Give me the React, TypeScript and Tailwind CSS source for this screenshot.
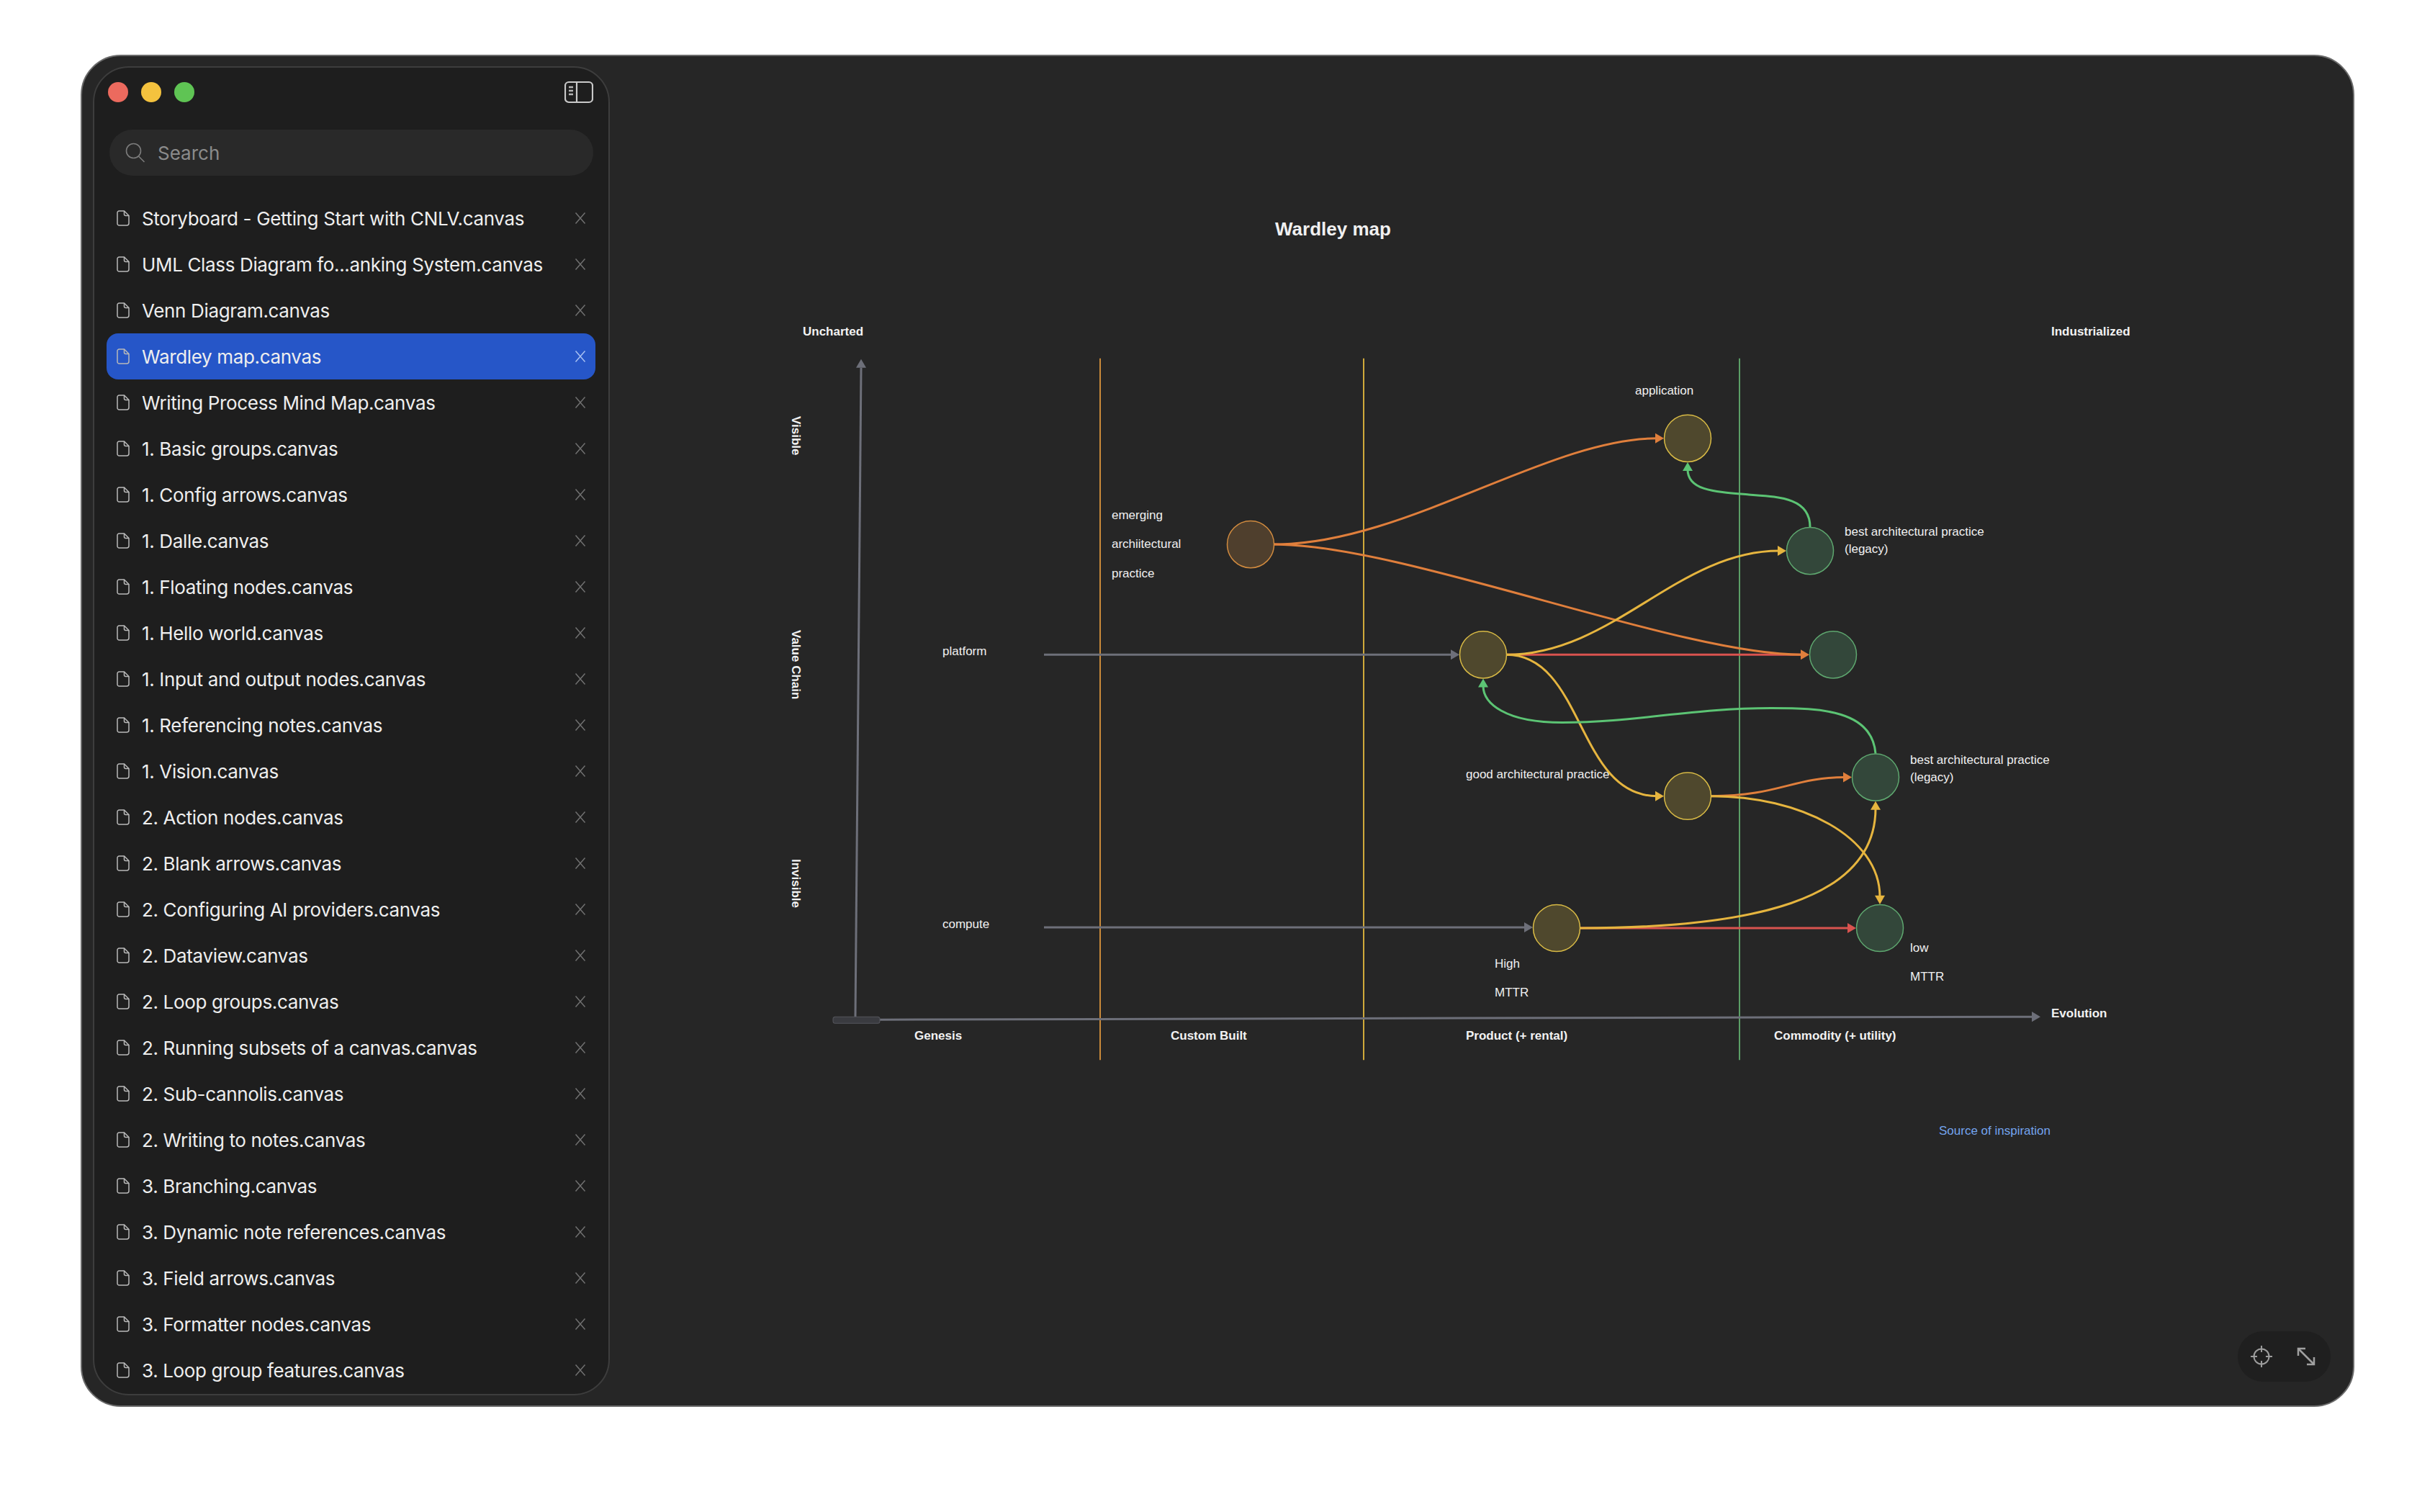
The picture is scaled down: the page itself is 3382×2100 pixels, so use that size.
const files = [
  'Storyboard - Getting Start with CNLV.canvas',
  'UML Class Diagram fo...anking System.canvas',
  'Venn Diagram.canvas',
  'Wardley map.canvas',
  'Writing Process Mind Map.canvas',
  '1. Basic groups.canvas',
  '1. Config arrows.canvas',
  '1. Dalle.canvas',
  '1. Floating nodes.canvas',
  '1. Hello world.canvas',
  '1. Input and output nodes.canvas',
  '1. Referencing notes.canvas',
  '1. Vision.canvas',
  '2. Action nodes.canvas',
  '2. Blank arrows.canvas',
  '2. Configuring AI providers.canvas',
  '2. Dataview.canvas',
  '2. Loop groups.canvas',
  '2. Running subsets of a canvas.canvas',
  '2. Sub-cannolis.canvas',
  '2. Writing to notes.canvas',
  '3. Branching.canvas',
  '3. Dynamic note references.canvas',
  '3. Field arrows.canvas',
  '3. Formatter nodes.canvas',
  '3. Loop group features.canvas',
];

// canvas coordinates are page pixels, main panel starts at 847,78
const OX = 847;
const OY = 78;
// the map is a touch taller than its measured coordinates
const YS = 1875 / 1872;

const GRAY = '#6d6f79';
const ORANGE = '#e07f3c';
const YELLOW = '#e6b53f';
const GREEN = '#5cc474';
const RED = '#d9534f';

const labels = [
  { text: 'Uncharted', x: 1115, y: 459, bold: true },
  { text: 'Industrialized', x: 2849, y: 459, bold: true },
  { text: 'emerging', x: 1544, y: 714 },
  { text: 'archiitectural', x: 1544, y: 754 },
  { text: 'practice', x: 1544, y: 795 },
  { text: 'platform', x: 1309, y: 903 },
  { text: 'application', x: 2271, y: 541 },
  { text: 'best architectural practice', x: 2562, y: 737 },
  { text: '(legacy)', x: 2562, y: 761 },
  { text: 'good architectural practice', x: 2036, y: 1073 },
  { text: 'best architectural practice', x: 2653, y: 1053 },
  { text: '(legacy)', x: 2653, y: 1077 },
  { text: 'compute', x: 1309, y: 1281 },
  { text: 'High', x: 2076, y: 1336 },
  { text: 'MTTR', x: 2076, y: 1376 },
  { text: 'low', x: 2653, y: 1314 },
  { text: 'MTTR', x: 2653, y: 1354 },
  { text: 'Genesis', x: 1270, y: 1436, bold: true },
  { text: 'Custom Built', x: 1626, y: 1436, bold: true },
  { text: 'Product (+ rental)', x: 2036, y: 1436, bold: true },
  { text: 'Commodity (+ utility)', x: 2464, y: 1436, bold: true },
  { text: 'Evolution', x: 2849, y: 1405, bold: true },
];

const sideLabels = [
  { text: 'Visible', x: 1097, y: 577 },
  { text: 'Value Chain', x: 1097, y: 874 },
  { text: 'Invisible', x: 1097, y: 1191 },
];

const nodes = [
  { x: 1737, y: 755, kind: 'orange' },
  { x: 2344, y: 608, kind: 'yellow' },
  { x: 2060, y: 908, kind: 'yellow' },
  { x: 2344, y: 1104, kind: 'yellow' },
  { x: 2162, y: 1287, kind: 'yellow' },
  { x: 2514, y: 764, kind: 'green' },
  { x: 2546, y: 908, kind: 'green' },
  { x: 2605, y: 1078, kind: 'green' },
  { x: 2611, y: 1287, kind: 'green' },
];

const nodeColors = {
  orange: { fill: '#4f3f2d', stroke: '#d18b3f' },
  yellow: { fill: '#4f482d', stroke: '#d8ba45' },
  green: { fill: '#33473a', stroke: '#5ea76f' },
};

const curves = [
  { d: 'M1222 1414 L2826 1410', color: GRAY },
  { d: 'M1188 1410 L1196 510', color: GRAY },
  { d: 'M1450 908 L2016 908', color: GRAY },
  { d: 'M1450 1286 L2118 1286', color: GRAY },
  { d: 'M2092 908 L2503 908', color: RED },
  { d: 'M2194 1287 L2568 1287', color: RED },
  { d: 'M1770 755 C1950 755 2150 608 2301 608', color: ORANGE },
  { d: 'M1770 755 C1950 755 2330 908 2503 908', color: ORANGE },
  { d: 'M2377 1104 C2470 1104 2490 1078 2562 1078', color: ORANGE },
  { d: 'M2092 908 C2240 908 2330 764 2471 764', color: YELLOW },
  { d: 'M2092 908 C2200 908 2190 1104 2301 1104', color: YELLOW },
  { d: 'M2377 1104 C2500 1104 2611 1160 2611 1244', color: YELLOW },
  { d: 'M2194 1287 C2430 1287 2605 1250 2605 1121', color: YELLOW },
  { d: 'M2514 731 C2514 690 2470 689 2429 686 C2380 682 2344 680 2344 651', color: GREEN },
  { d: 'M2605 1045 C2600 985 2530 982 2460 982 C2350 982 2270 1002 2170 1002 C2090 1002 2060 975 2060 951', color: GREEN },
];

// arrow tip position and direction
const arrows = [
  { x: 2834, y: 1410, dir: 'right', color: GRAY },
  { x: 1196, y: 498, dir: 'up', color: GRAY },
  { x: 2027, y: 908, dir: 'right', color: GRAY },
  { x: 2129, y: 1286, dir: 'right', color: GRAY },
  { x: 2311, y: 608, dir: 'right', color: ORANGE },
  { x: 2513, y: 908, dir: 'right', color: ORANGE },
  { x: 2572, y: 1078, dir: 'right', color: ORANGE },
  { x: 2578, y: 1287, dir: 'right', color: RED },
  { x: 2481, y: 764, dir: 'right', color: YELLOW },
  { x: 2311, y: 1104, dir: 'right', color: YELLOW },
  { x: 2611, y: 1254, dir: 'down', color: YELLOW },
  { x: 2605, y: 1111, dir: 'up', color: YELLOW },
  { x: 2344, y: 641, dir: 'up', color: GREEN },
  { x: 2060, y: 941, dir: 'up', color: GREEN },
];

const arrowPoints = (x: number, y: number, dir: string) => {
  const s = 12;
  const w = 7;
  if (dir === 'right') return `${x},${y} ${x - s},${y - w} ${x - s},${y + w}`;
  if (dir === 'down') return `${x},${y} ${x - w},${y - s} ${x + w},${y - s}`;
  return `${x},${y} ${x - w},${y + s} ${x + w},${y + s}`;
};

const FileIcon = () => (
  <svg width="18" height="22" viewBox="0 0 18 22" fill="none" stroke="#b9b9b9" strokeWidth="1.5" className="shrink-0">
    <path d="M3.5 1h7l6.5 6.5V18a3 3 0 0 1-3 3H3.5a2.5 2.5 0 0 1-2.5-2.500V3.500A2.500 2.500 0 0 1 3.500 1z" />
    <path d="M10.500 1v4.500a2 2 0 0 0 2 2H17" />
  </svg>
);

const CloseIcon = ({ active }: { active: boolean }) => (
  <svg width="16" height="18" viewBox="0 0 16 18" fill="none" stroke={active ? '#a8c0f2' : '#707070'} strokeWidth="1.5" className="shrink-0">
    <path d="M1.500 1.500l13 15M14.500 1.500l-13 15" />
  </svg>
);

const Sidebar = () => (
  <aside className="ml-[15px] mt-[14px] flex h-[1846px] w-[718px] shrink-0 flex-col rounded-[50px] border-2 border-[#3d3d3d] bg-[#1e1e1e]">
    <div className="flex h-[68px] shrink-0 items-center justify-between pl-[19px] pr-[21px]">
      <div className="flex items-center gap-[18px]">
        <span className="h-[28px] w-[28px] rounded-full bg-[#ec6a5e]" />
        <span className="h-[28px] w-[28px] rounded-full bg-[#f4c23e]" />
        <span className="h-[28px] w-[28px] rounded-full bg-[#5fc454]" />
      </div>
      <svg width="40" height="32" viewBox="0 0 40 32" fill="none" stroke="#c9c9c9" strokeWidth="2.200">
        <rect x="1" y="2" width="38" height="28" rx="5" />
        <path d="M17 2v28" />
        <path d="M6 9h6M6 14h6M6 19h6" strokeWidth="2.500" stroke="#b5b5b5" />
      </svg>
    </div>
    <div className="ml-[21px] mt-[18px] flex h-[64px] w-[672px] shrink-0 items-center rounded-[32px] bg-[#292929] pl-[22px]">
      <svg width="28" height="28" viewBox="0 0 28 28" fill="none" stroke="#7b7b7b" strokeWidth="1.6" className="shrink-0">
        <circle cx="11.500" cy="11.500" r="10" />
        <path d="M18.500 19l8 8" />
      </svg>
      <span className="ml-[17px] pt-[2px] font-['Inter',sans-serif] text-[26px] leading-[32px] text-[#8b8b8b]">Search</span>
    </div>
    <ul className="mt-[27px] flex flex-col">
      {files.map((name) => {
        const active = name === 'Wardley map.canvas';
        return (
          <li
            key={name}
            className={
              active
                ? 'ml-[17px] flex h-[64px] w-[679px] shrink-0 items-center rounded-[16px] bg-[#2656c8] pl-[14px] pr-[13px]'
                : 'ml-[17px] flex h-[64px] w-[679px] shrink-0 items-center pl-[14px] pr-[13px]'
            }
          >
            <FileIcon />
            <span className="ml-[17px] flex-1 whitespace-nowrap pt-[2px] font-['Inter',sans-serif] text-[26px] leading-[32px] tracking-[-0.35px] text-[#eeeeee]">
              {name}
            </span>
            <CloseIcon active={active} />
          </li>
        );
      })}
    </ul>
  </aside>
);

const WardleyCanvas = () => (
  <>
    <svg
      width="2421"
      height="1875"
      viewBox={`${OX} ${OY} 2421 1872`}
      preserveAspectRatio="none"
      fill="none"
      className="absolute left-0 top-0"
    >
      <path d="M1528 497V1470" stroke="#c98a3a" strokeWidth="2" />
      <path d="M1894 497V1470" stroke="#cfa93a" strokeWidth="2" />
      <path d="M2416 497V1470" stroke="#5b9e66" strokeWidth="2" />
      {curves.map((c) => (
        <path key={c.d} d={c.d} stroke={c.color} strokeWidth="3" />
      ))}
      {arrows.map((a) => (
        <polygon key={`${a.x}-${a.y}-${a.color}`} points={arrowPoints(a.x, a.y, a.dir)} fill={a.color} />
      ))}
      <rect x="1157" y="1410" width="65" height="9" rx="3" fill="#3a3b40" stroke="#55565c" strokeWidth="1" />
      {nodes.map((n) => (
        <circle
          key={`${n.x}-${n.y}`}
          cx={n.x}
          cy={n.y}
          r="32.500"
          fill={nodeColors[n.kind as keyof typeof nodeColors].fill}
          stroke={nodeColors[n.kind as keyof typeof nodeColors].stroke}
          strokeWidth="1.500"
        />
      ))}
    </svg>

    <h1
      className="absolute -translate-y-1/2 whitespace-nowrap font-['Liberation_Sans',sans-serif] text-[26px] font-bold leading-none text-[#f0f0f0]"
      style={{ left: 1771 - OX, top: (318 - OY) * YS }}
    >
      Wardley map
    </h1>

    {labels.map((l) => (
      <span
        key={`${l.text}-${l.x}-${l.y}`}
        className={
          l.bold
            ? "absolute -translate-y-1/2 whitespace-nowrap font-['Liberation_Sans',sans-serif] text-[17px] font-bold leading-none text-[#f2f2f2]"
            : "absolute -translate-y-1/2 whitespace-nowrap font-['Liberation_Sans',sans-serif] text-[17px] leading-none text-[#f0f0f0]"
        }
        style={{ left: l.x - OX, top: (l.y - OY) * YS }}
      >
        {l.text}
      </span>
    ))}

    {sideLabels.map((l) => (
      <span
        key={l.text}
        className="absolute whitespace-nowrap font-['Liberation_Sans',sans-serif] text-[17px] font-bold leading-none text-[#f2f2f2] [writing-mode:vertical-rl]"
        style={{ left: l.x - OX, top: (l.y - OY) * YS }}
      >
        {l.text}
      </span>
    ))}

    <a
      className="absolute -translate-y-1/2 whitespace-nowrap font-['Liberation_Sans',sans-serif] text-[17px] leading-none text-[#74a4ee]"
      style={{ left: 2693 - OX, top: (1568 - OY) * YS }}
    >
      Source of inspiration
    </a>

    <div className="absolute bottom-[33px] right-[31px] flex h-[70px] w-[129px] items-center justify-between rounded-[35px] bg-[#1f1f1f] pl-[17px] pr-[21px]">
      <svg width="32" height="32" viewBox="0 0 32 32" fill="none" stroke="#9c9c9c" strokeWidth="2">
        <circle cx="16" cy="16" r="10.500" />
        <path d="M16 1v9M16 22v9M1 16h9M22 16h9" />
      </svg>
      <svg width="26" height="26" viewBox="0 0 26 26" fill="none" stroke="#a0a0a0" strokeWidth="2.500">
        <path d="M2 2l22 22" />
        <path d="M2 12V2h10" />
        <path d="M24 14v10H14" />
      </svg>
    </div>
  </>
);

export default function App() {
  return (
    <div className="h-[2100px] w-full bg-white pl-[112px] pt-[76px]">
      <div className="flex h-[1878px] w-[3158px] overflow-hidden rounded-[56px] border-2 border-[#6a6a6a] bg-[#262626]">
        <Sidebar />
        <main className="relative flex-1">
          <WardleyCanvas />
        </main>
      </div>
    </div>
  );
}
